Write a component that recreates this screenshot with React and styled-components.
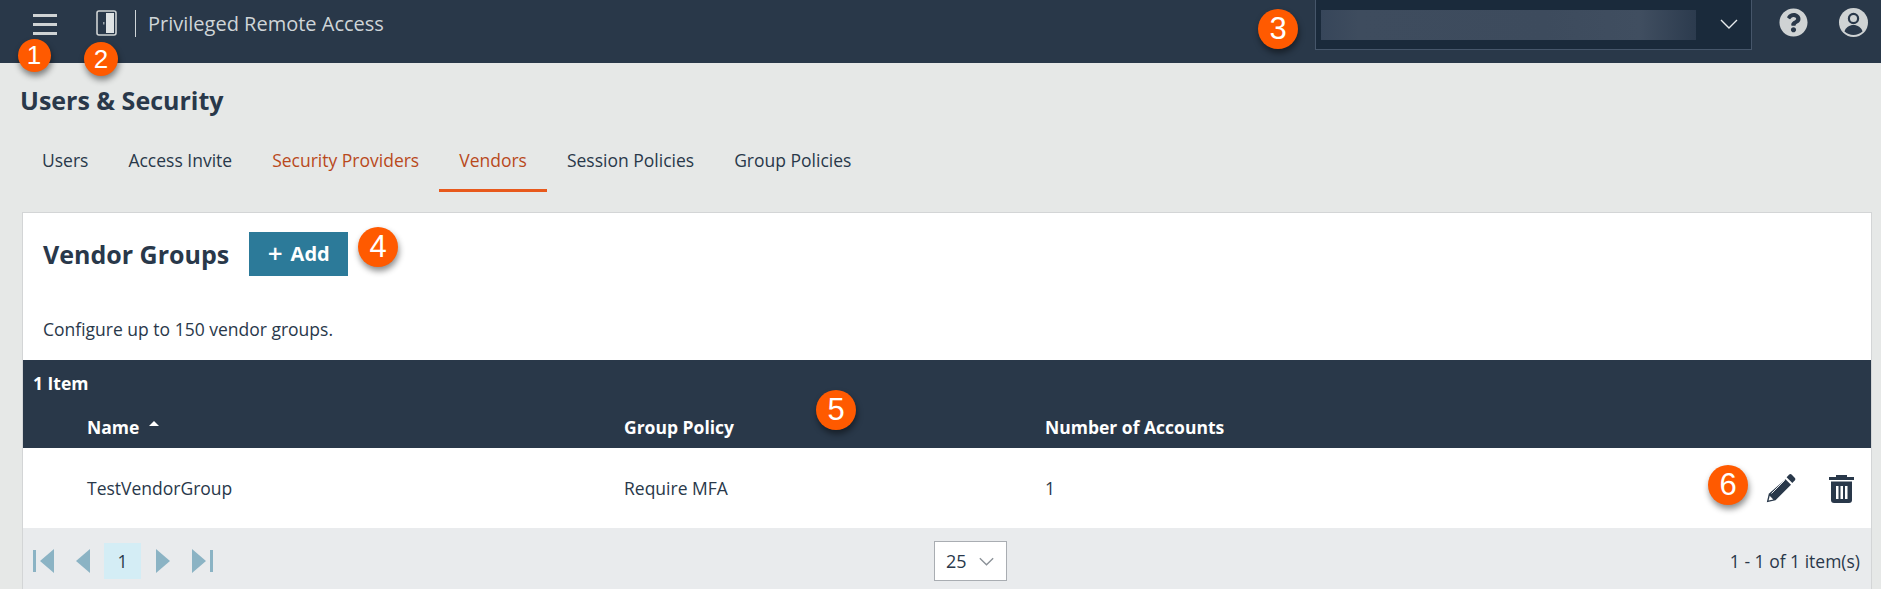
import React from 'react'
import styled, { createGlobalStyle } from 'styled-components'
import { FaQuestionCircle } from 'react-icons/fa'

const GlobalStyle = createGlobalStyle`
  html, body {
    margin: 0;
    padding: 0;
    background: #e6e8e7;
    color: #29384a;
    font-family: 'Open Sans', 'Noto Sans', sans-serif;
    overflow: hidden;
  }
`

const Page = styled.div`
  position: relative;
  width: 1881px;
  height: 589px;
  overflow: hidden;
`

const TopBar = styled.header`
  display: flex;
  align-items: flex-start;
  height: 63px;
  padding-right: 13px;
  background: #293849;
  color: #cfd5d8;
`

const Burger = styled.div`
  display: flex;
  flex-direction: column;
  gap: 6px;
  width: 24px;
  margin: 14px 0 0 33px;
  span {
    height: 3px;
    background: #cfd3d4;
  }
`

const DoorWrap = styled.div`
  margin: 10px 0 0 39px;
  height: 26px;
`

const Divider = styled.div`
  width: 1px;
  height: 27px;
  margin: 10px 12px 0 18px;
  background: #cfd5d8;
`

const ProductName = styled.div`
  font-size: 20px;
  line-height: 28px;
  margin-top: 10px;
  flex: 1;
`

const Picker = styled.div`
  display: flex;
  align-items: flex-start;
  box-sizing: border-box;
  width: 437px;
  height: 50px;
  padding: 10px 0 0 5px;
  background: #1a2a3b;
  border: 1px solid #46566a;
  border-top: 0;
`

const Blurred = styled.div`
  width: 375px;
  height: 30px;
  background: linear-gradient(90deg, #37465a 0%, #3e4c5e 10%, #3d4b5d 60%, #404e60 85%, #2c3b4e 100%);
`

const PickerChevron = styled.svg`
  width: 18px;
  height: 12px;
  margin: 8px 0 0 24px;
`

const HeadIcon = styled.div`
  display: flex;
  margin: 8px 0 0 ${p => p.$left}px;
  color: #cfd3d4;
`

const Title = styled.h1`
  margin: 0;
  padding: 20px 0 0 20px;
  font-size: 25px;
  line-height: 34px;
  font-weight: 700;
`

const Tabs = styled.nav`
  display: flex;
  height: 68px;
  margin: 27px 0 0 22px;
`

const Tab = styled.div`
  box-sizing: border-box;
  height: 48px;
  padding: 4px 20px 0;
  font-size: 17.5px;
  line-height: 24px;
  color: ${p => (p.$accent ? '#b9491c' : '#29384a')};
  border-bottom: 3px solid ${p => (p.$active ? '#e8591c' : 'transparent')};
`

const Card = styled.section`
  box-sizing: border-box;
  width: 1850px;
  height: 384px;
  margin-left: 22px;
  background: #fff;
  border: 1px solid #d3d5d6;
`

const CardHead = styled.div`
  display: flex;
  align-items: center;
  gap: 20px;
  padding: 19px 0 0 20px;
`

const CardTitle = styled.h2`
  margin: 0;
  font-size: 25px;
  line-height: 44px;
  font-weight: 700;
`

const AddButton = styled.button`
  display: flex;
  align-items: center;
  justify-content: center;
  gap: 8px;
  width: 99px;
  height: 44px;
  border: 0;
  padding: 0 0 2px;
  background: #2c7a99;
  color: #fff;
  font-family: inherit;
  font-size: 20px;
  font-weight: 700;
`

const Plus = styled.span`
  font-size: 26px;
  font-weight: 600;
  line-height: 24px;
`

const Hint = styled.p`
  margin: 0;
  padding: 41px 0 0 20px;
  font-size: 17.5px;
  line-height: 24px;
`

const TableHead = styled.div`
  margin-top: 19px;
  height: 88px;
  background: #293849;
  color: #fff;
  font-weight: 700;
  font-size: 17.5px;
`

const ItemCount = styled.div`
  padding: 11px 0 0 10px;
  line-height: 24px;
  height: 55px;
  box-sizing: border-box;
`

const Columns = styled.div`
  display: grid;
  grid-template-columns: 64px 537px 421px 1fr;
  line-height: 24px;
`

const NameHead = styled.div`
  grid-column: 2;
  display: flex;
  align-items: center;
  gap: 10px;
`

const SortArrow = styled.span`
  width: 0;
  height: 0;
  margin-top: -7px;
  border-left: 5.5px solid transparent;
  border-right: 5.5px solid transparent;
  border-bottom: 5px solid #fff;
`

const Row = styled.div`
  display: grid;
  grid-template-columns: 64px 537px 421px 1fr auto;
  align-items: center;
  height: 80px;
  font-size: 17.5px;
  background: #fff;
`

const Cell = styled.div`
  grid-column: ${p => p.$col};
`

const Actions = styled.div`
  grid-column: 5;
  display: flex;
  align-items: center;
  gap: 33px;
  padding-right: 17px;
`

const Footer = styled.div`
  display: grid;
  grid-template-columns: 1fr auto 1fr;
  align-items: center;
  height: 66px;
  padding: 0 11px 0 10px;
  background: #e9ebed;
  font-size: 17.5px;
`

const Pager = styled.div`
  display: flex;
  align-items: center;
`

const PagerIcon = styled.svg`
  display: block;
  margin-right: ${p => p.$after}px;
`

const PageNum = styled.div`
  width: 37px;
  height: 36px;
  margin-right: 15px;
  background: #d4edf5;
  text-align: center;
  line-height: 36px;
`

const PageSize = styled.div`
  display: flex;
  align-items: center;
  justify-content: space-between;
  box-sizing: border-box;
  width: 73px;
  height: 40px;
  margin-left: 48px;
  padding: 0 12px 0 11px;
  background: #fff;
  border: 1px solid #a9adb2;
  font-size: 18px;
`

const Range = styled.div`
  text-align: right;
`

// numbered callouts drawn over the screenshot
const Badge = styled.div`
  position: absolute;
  left: ${p => p.$x - p.$d / 2}px;
  top: ${p => p.$y - p.$d / 2}px;
  width: ${p => p.$d}px;
  height: ${p => p.$d}px;
  border-radius: 50%;
  background: #ff5a00;
  color: #fff;
  display: flex;
  align-items: center;
  justify-content: center;
  font-family: 'Liberation Sans', Arial, sans-serif;
  font-size: ${p => (p.$d < 36 ? 26 : 31)}px;
  box-shadow: 1px 4px 6px rgba(0, 0, 0, 0.45);
`

const Door = () => (
  <svg width="21" height="26" viewBox="0 0 21 26">
    <rect x="1" y="1" width="19" height="24" rx="2" fill="none" stroke="#cfd3d4" strokeWidth="1.6" />
    <path d="M10 3h8v20h-8z" fill="#dfe3e4" />
    <rect x="7" y="12" width="1.500" height="2.500" fill="#9aa3a9" />
  </svg>
)

const UserIcon = () => (
  <svg width="29" height="29" viewBox="0 0 29 29">
    <circle cx="14.5" cy="14.5" r="14.5" fill="#cfd3d4" />
    <circle cx="14.5" cy="10.500" r="4.600" fill="none" stroke="#29384a" strokeWidth="2.200" />
    <path d="M5.500 23.500c1-4 5-6.500 9-6.500s8 2.500 9 6.500c-2.500 2.300-5.600 3.500-9 3.500s-6.500-1.200-9-3.500z" fill="#29384a" />
  </svg>
)

const Pencil = () => (
  <svg width="30" height="29" viewBox="0 0 30 29">
    <path d="M23 .8a2 2 0 0 1 2.800 0l2.900 2.900a2 2 0 0 1 0 2.800l-2.400 2.400-5.700-5.700z" fill="#29384a" />
    <path d="M19.500 5.300l5.500 5.500L9.500 26.300.8 28.300l2-8.500z" fill="#29384a" />
    <path d="M3.700 21.800l3.600 3.600-4.700 1.100z" fill="#fff" />
    <path d="M5.500 19.500L18.800 6.200" stroke="#fff" strokeWidth="0.900" />
  </svg>
)

const Trash = () => (
  <svg width="25" height="29" viewBox="0 0 25 29">
    <path d="M0 3h7V1h11v2h7v3H0z" fill="#29384a" />
    <path d="M2 7.500h21V26a3 3 0 0 1-3 3H5a3 3 0 0 1-3-3z" fill="#29384a" />
    <path d="M7 12h2.500v13H7zM11.500 12H14v13h-2.500zM16 12h2.500v13H16z" fill="#fff" />
  </svg>
)

const Chevron = ({ color, w, h }) => (
  <svg width={w} height={h} viewBox="0 0 18 10" fill="none" stroke={color} strokeWidth="1.6">
    <path d="M1 1l8 8 8-8" />
  </svg>
)

const App = () => (
  <Page>
    <GlobalStyle />
    <TopBar>
      <Burger><span /><span /><span /></Burger>
      <DoorWrap><Door /></DoorWrap>
      <Divider />
      <ProductName>Privileged Remote Access</ProductName>
      <Picker>
        <Blurred />
        <PickerChevron viewBox="0 0 18 10" fill="none" stroke="#e8ecee" strokeWidth="1.4">
          <path d="M1 1l8 8 8-8" />
        </PickerChevron>
      </Picker>
      <HeadIcon $left={27}><FaQuestionCircle size={29} /></HeadIcon>
      <HeadIcon $left={31}><UserIcon /></HeadIcon>
    </TopBar>

    <Title>Users &amp; Security</Title>
    <Tabs>
      <Tab>Users</Tab>
      <Tab>Access Invite</Tab>
      <Tab $accent>Security Providers</Tab>
      <Tab $accent $active>Vendors</Tab>
      <Tab>Session Policies</Tab>
      <Tab>Group Policies</Tab>
    </Tabs>

    <Card>
      <CardHead>
        <CardTitle>Vendor Groups</CardTitle>
        <AddButton><Plus>+</Plus><span>Add</span></AddButton>
      </CardHead>
      <Hint>Configure up to 150 vendor groups.</Hint>
      <TableHead>
        <ItemCount>1 Item</ItemCount>
        <Columns>
          <NameHead>Name <SortArrow /></NameHead>
          <div>Group Policy</div>
          <div>Number of Accounts</div>
        </Columns>
      </TableHead>
      <Row>
        <Cell $col={2}>TestVendorGroup</Cell>
        <Cell $col={3}>Require MFA</Cell>
        <Cell $col={4}>1</Cell>
        <Actions><Pencil /><Trash /></Actions>
      </Row>
      <Footer>
        <Pager>
          <PagerIcon width="21" height="24" viewBox="0 0 21 24" fill="#8bb3c4" $after={22}>
            <path d="M0 1h3v22H0zM21 0v24L7 12z" />
          </PagerIcon>
          <PagerIcon width="14" height="24" viewBox="0 0 14 24" fill="#8bb3c4" $after={14}>
            <path d="M14 0v24L0 12z" />
          </PagerIcon>
          <PageNum>1</PageNum>
          <PagerIcon width="14" height="24" viewBox="0 0 14 24" fill="#8bb3c4" $after={22}>
            <path d="M0 0v24l14-12z" />
          </PagerIcon>
          <PagerIcon width="21" height="24" viewBox="0 0 21 24" fill="#8bb3c4" $after={0}>
            <path d="M18 1h3v22h-3zM0 0v24l14-12z" />
          </PagerIcon>
        </Pager>
        <PageSize>25 <Chevron color="#8a9097" w={15} h={9} /></PageSize>
        <Range>1 - 1 of 1 item(s)</Range>
      </Footer>
    </Card>

    <Badge $x={34} $y={55} $d={33}>1</Badge>
    <Badge $x={101} $y={59} $d={34}>2</Badge>
    <Badge $x={1278} $y={29} $d={40}>3</Badge>
    <Badge $x={378} $y={247} $d={40}>4</Badge>
    <Badge $x={836} $y={410} $d={40}>5</Badge>
    <Badge $x={1728} $y={485} $d={40}>6</Badge>
  </Page>
)

export default App
